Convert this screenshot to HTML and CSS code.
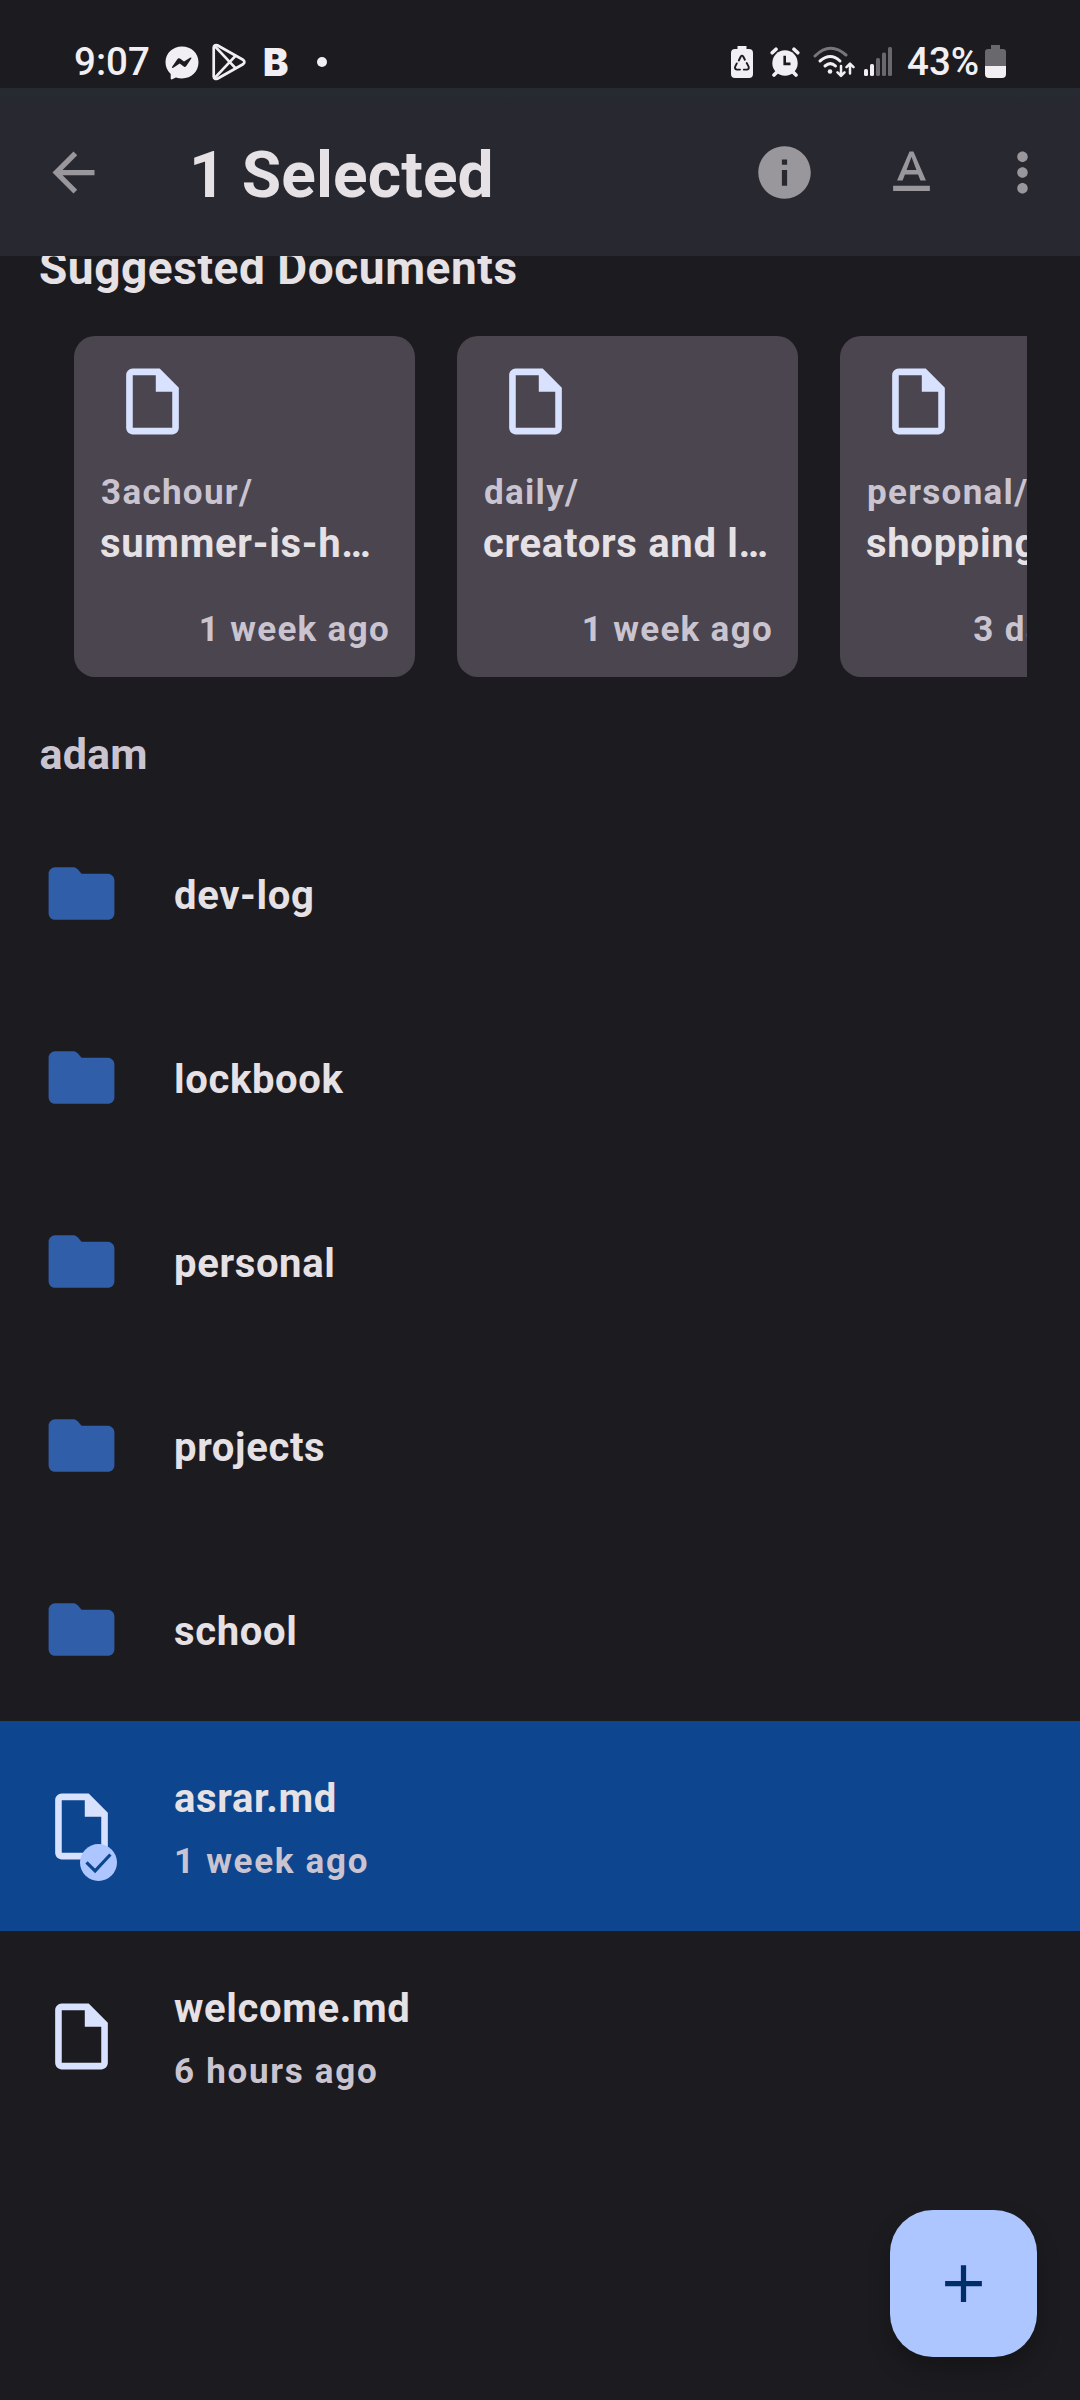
FILE: index.html
```
<!DOCTYPE html>
<html lang="en">
<head>
<meta charset="utf-8">
<title>Files</title>
<link rel="stylesheet" href="styles.css">
</head>
<body>
<svg class="defs" width="0" height="0" aria-hidden="true">
  <symbol id="file" viewBox="0 0 24 24"><path d="M14.2 2H6c-1.100 0-2 .9-2 2v16c0 1.100.9 2 2 2h12c1.100 0 2-.9 2-2V7.800zM6 20V4h7v5h5v11z"/></symbol>
  <symbol id="folder" viewBox="0 0 24 24"><path d="M9.700 4H4c-1.100 0-2 .9-2 2v12c0 1.100.9 2 2 2h16c1.100 0 2-.9 2-2V8c0-1.100-.9-2-2-2h-8l-1-1.200q-.6-.8-1.300-.8z"/></symbol>
</svg>

<div class="screen">
  <header class="status">
    <span class="clock">9:07</span>
    <svg class="st-messenger" viewBox="0 0 34 34"><path fill="#f2eff4" d="M17 .5C7.500.5.5 7.300.5 16.300c0 4.800 2 8.900 5.200 11.700v4.500q.2 1.300 1.500.8l3.700-1.700c2 .6 4 .8 6.100.8 9.500 0 16.500-6.900 16.500-16.100S26.500.5 17 .5z"/><path fill="#1c1b1f" d="M7 21l5.500-8q1-1.500 2.500-.4l4 3 6-3.800q2-1 1.300.8l-5 7.400q-1.300 1.400-2.600.6l-4-3-6 4q-2.200 1-1.700-.6z"/></svg>
    <svg class="st-play" viewBox="0 0 34 38"><g fill="none" stroke="#f2eff4" stroke-width="2.700" stroke-linejoin="round"><path d="M1.700 4.500v29q.4 3.200 3.600 2.300L31 21.300q2.800-2.300 0-4.600L5.300 2.200Q2.100 1.300 1.700 4.500z"/><path d="M2.500 2.800L23.500 25.200M2.500 35.200L23.500 12.800"/></g></svg>
    <span class="st-b">B</span>
    <span class="st-dot"></span>
    <svg class="st-saver" viewBox="0 0 22 32"><path fill="#f2eff4" d="M6.500 0h9v3H18q4 0 4 4v21q0 4-4 4H4q-4 0-4-4V7q0-4 4-4h2.500z"/><g fill="none" stroke="#1c1b1f" stroke-width="1.900" stroke-linecap="round" stroke-linejoin="round"><path d="M7.800 14.500l2-4q1.200-1.800 2.400 0l1.700 3.200M15.700 17l1.800 3.400q1 2.700-1.500 3.200h-3.200M9 23.600H5.800q-2.600-.6-1.500-3.200l1.500-3"/></g></svg>
    <svg class="st-alarm" viewBox="0 0 30 30"><g stroke="#f2eff4" stroke-width="3.600" stroke-linecap="round"><path d="M2.200 5.800L6 2.200M27.800 5.800L24 2.200M7 25l-3 3M23 25l3 3"/></g><circle cx="15" cy="16" r="12.700" fill="#f2eff4"/><path d="M14.700 8.800v8.100h5.800" fill="none" stroke="#1c1b1f" stroke-width="2.600"/></svg>
    <svg class="st-wifi" viewBox="0 0 42 32"><g fill="none" stroke-width="3" stroke-linecap="round"><path stroke="#77767a" d="M2 10Q17-5 33 9"/><path stroke="#f2eff4" d="M7 15q10.500-9 20 0M12 20q5.500-4.800 10.500 0"/></g><circle cx="17" cy="25.500" r="2.300" fill="#f2eff4"/><path fill="none" stroke="#f2eff4" stroke-width="2.500" stroke-linecap="round" stroke-linejoin="round" d="M28 20v9.500m-3.500-3.200l3.500 3.500 3.500-3.500M37 27.500V18m-3.500 3.200L37 17.700l3.500 3.500"/></svg>
    <svg class="st-signal" viewBox="0 0 28 30"><g fill="#f2eff4"><rect y="22" width="4" height="7" rx="1.500"/><rect x="6" y="17" width="4" height="12" rx="1.500"/></g><g fill="#69686d"><rect x="12" y="11" width="4" height="18" rx="1.500"/><rect x="18" y="5.500" width="4" height="23.500" rx="1.500"/><rect x="24" width="4" height="29" rx="1.500"/></g></svg>
    <span class="percent">43%</span>
    <svg class="st-battery" viewBox="0 0 21 33"><path fill="#69686d" d="M6 0h9v4h3q3 0 3 3v14H0V7q0-3 3-3h3z"/><path fill="#f2eff4" d="M0 21h21v8q0 4-4 4H4q-4 0-4-4z"/></svg>
  </header>

  <nav class="toolbar">
    <svg class="tb-icon tb-back" viewBox="0 0 24 24"><path d="M20 11H7.830l5.590-5.590L12 4l-8 8 8 8 1.410-1.410L7.830 13H20v-2z"/></svg>
    <h1 class="title">1 Selected</h1>
    <svg class="tb-icon tb-info" viewBox="0 0 24 24"><path d="M12 2C6.480 2 2 6.480 2 12s4.480 10 10 10 10-4.480 10-10S17.520 2 12 2zm1 15h-2v-6h2v6zm0-8h-2V7h2v2z"/></svg>
    <svg class="tb-icon tb-rename" viewBox="0 0 24 24"><path d="M5 17v2h14v-2H5zm4.500-4.200h5l.9 2.200h2.100L12.750 4h-1.500L6.500 15h2.100l.9-2.200zM12 5.980L13.870 11h-3.740L12 5.980z"/></svg>
    <svg class="tb-icon tb-more" viewBox="0 0 24 24"><path d="M12 8c1.100 0 2-.9 2-2s-.9-2-2-2-2 .9-2 2 .9 2 2 2zm0 2c-1.100 0-2 .9-2 2s.9 2 2 2 2-.9 2-2-.9-2-2-2zm0 6c-1.100 0-2 .9-2 2s.9 2 2 2 2-.9 2-2-.9-2-2-2z"/></svg>
  </nav>

  <main class="content">
    <h2 class="section">Suggested Documents</h2>
    <div class="cards">
      <article class="card"><svg class="card-icon"><use href="#file"/></svg><span class="card-folder">3achour/</span><span class="card-name">summer-is-h…</span><span class="card-time">1 week ago</span></article>
      <article class="card"><svg class="card-icon"><use href="#file"/></svg><span class="card-folder">daily/</span><span class="card-name">creators and l…</span><span class="card-time">1 week ago</span></article>
      <article class="card"><svg class="card-icon"><use href="#file"/></svg><span class="card-folder">personal/</span><span class="card-name">shopping</span><span class="card-time">3 days ago</span></article>
    </div>
    <h2 class="path">adam</h2>
    <ul class="list">
      <li class="row"><span class="icon-box"><svg class="row-icon folder"><use href="#folder"/></svg></span><span class="name">dev-log</span></li>
      <li class="row"><span class="icon-box"><svg class="row-icon folder"><use href="#folder"/></svg></span><span class="name">lockbook</span></li>
      <li class="row"><span class="icon-box"><svg class="row-icon folder"><use href="#folder"/></svg></span><span class="name">personal</span></li>
      <li class="row"><span class="icon-box"><svg class="row-icon folder"><use href="#folder"/></svg></span><span class="name">projects</span></li>
      <li class="row"><span class="icon-box"><svg class="row-icon folder"><use href="#folder"/></svg></span><span class="name">school</span></li>
      <li class="row doc selected">
        <span class="icon-box"><svg class="row-icon"><use href="#file"/></svg><svg class="badge" viewBox="0 0 37 37"><circle cx="18.500" cy="18.500" r="18.500" fill="#aec6ff"/><path d="M6.500 18.300l8.600 8.600L30.400 10.500" fill="none" stroke="#0d468f" stroke-width="3.200"/></svg></span>
        <span class="text"><span class="name">asrar.md</span><span class="sub">1 week ago</span></span>
      </li>
      <li class="row doc">
        <span class="icon-box"><svg class="row-icon"><use href="#file"/></svg></span>
        <span class="text"><span class="name">welcome.md</span><span class="sub">6 hours ago</span></span>
      </li>
    </ul>
  </main>

  <button class="fab" aria-label="Create"><svg class="fab-icon" viewBox="0 0 24 24"><path d="M19 13h-6v6h-2v-6H5v-2h6V5h2v6h6v2z"/></svg></button>
</div>
</body>
</html>
```
FILE: styles.css
```
* { box-sizing: border-box; }
body { margin: 0; background: #1c1b1f; font-family: "Roboto", sans-serif; }
h1, h2, ul { margin: 0; padding: 0; font-weight: 700; }
svg { display: block; flex: none; }
.defs { position: absolute; }

.screen {
  position: relative;
  width: 1080px;
  height: 2400px;
  overflow: hidden;
  display: flex;
  flex-direction: column;
  background: #1c1b1f;
}

/* Status bar */
.status {
  flex: none;
  height: 88px;
  padding: 35px 0 0 74px;
  display: flex;
  align-items: flex-start;
  color: #f2eff4;
}
.clock, .percent { font-size: 38.500px; font-weight: 500; line-height: 46px; margin-top: 4px; white-space: nowrap; }
.clock { width: 80px; }
.percent { width: 74px; margin-left: 15px; }
.st-messenger { width: 34px; height: 34px; margin: 11px 0 0 11px; }
.st-play { width: 34px; height: 38px; margin: 8px 0 0 12.500px; }
.st-b { width: 30px; margin: 4px 0 0 17.500px; font: 900 38px/46px "Inter", sans-serif; }
.st-dot { width: 10px; height: 10px; margin: 22px 0 0 24px; border-radius: 50%; background: #f2eff4; }
.st-saver { width: 22px; height: 32px; margin: 10.500px 0 0 404px; }
.st-alarm { width: 30px; height: 30px; margin: 12px 0 0 17px; }
.st-wifi { width: 42px; height: 32px; margin: 10.500px 0 0 13px; }
.st-signal { width: 28px; height: 30px; margin: 12px 0 0 9px; }
.st-battery { width: 21px; height: 33px; margin: 10px 0 0 4px; }

/* Contextual toolbar */
.toolbar {
  flex: none;
  height: 168px;
  padding: 0 26px 0 42px;
  display: flex;
  align-items: center;
  background: linear-gradient(#252a31, #282930 14px);
}
.tb-icon { width: 63px; height: 63px; fill: #99979c; }
.tb-info { margin-left: auto; }
.tb-rename { margin-left: 64px; }
.tb-more { margin-left: 48px; }
.title {
  margin-left: 84px;
  padding-top: 7px;
  font-size: 64px;
  line-height: 76px;
  letter-spacing: 0.1px;
  color: #e6e1e5;
}

/* Scrolled content */
.content { flex: 1; overflow: hidden; }
.section {
  margin: -13px 0 0 39px;
  font-size: 46px;
  line-height: 50px;
  letter-spacing: 0.550px;
  color: #e6e1e5;
}
.cards {
  margin: 43px 53px 0 74px;
  display: flex;
  gap: 42px;
  overflow: hidden;
}
.card {
  flex: none;
  width: 341px;
  height: 341px;
  padding: 25.500px 25px 0 26px;
  display: flex;
  flex-direction: column;
  border-radius: 21px;
  background: #4b454f;
}
.card-icon { width: 79px; height: 79px; margin-left: 13px; fill: #d8e2ff; }
.card-folder, .card-time { font-size: 35px; font-weight: 700; line-height: 40px; letter-spacing: 1.300px; color: #cac4d0; white-space: nowrap; }
.card-folder { margin: 32px 0 0 1px; }
.card-name { margin-top: 8px; font-size: 40px; font-weight: 700; line-height: 46px; letter-spacing: 0.700px; color: #e6e1e5; white-space: nowrap; }
.card-time { margin-top: 43px; text-align: right; }

.path {
  margin: 52px 0 0 39.500px;
  font-size: 43px;
  line-height: 50px;
  letter-spacing: 0.200px;
  color: #cac4d0;
}

/* File list */
.list { margin-top: 22px; list-style: none; }
.row {
  height: 184px;
  padding-left: 42px;
  display: flex;
  align-items: center;
}
.doc { height: 210px; }
.selected { background: #0d468f; }
.icon-box { position: relative; flex: none; width: 79px; margin-right: 53px; }
.row-icon { width: 79px; height: 79px; fill: #d8e2ff; }
.folder { fill: #305ea8; }
.badge { position: absolute; left: 38px; top: 57px; width: 37px; height: 37px; }
.name { padding-top: 5px; font-size: 40px; font-weight: 700; line-height: 46px; letter-spacing: 0.650px; color: #e6e1e5; }
.text { display: flex; flex-direction: column; gap: 20px; }
.sub { font-size: 35px; font-weight: 700; line-height: 40px; letter-spacing: 1.700px; color: #cac4d0; }

/* Create button */
.fab {
  position: absolute;
  right: 43px;
  bottom: 43px;
  width: 147px;
  height: 147px;
  padding: 0;
  display: grid;
  place-items: center;
  border: 0;
  border-radius: 43px;
  background: #adc6ff;
  box-shadow: 0 12px 22px rgba(0, 0, 0, 0.25);
}
.fab-icon { width: 63px; height: 63px; fill: #002e69; }
```
